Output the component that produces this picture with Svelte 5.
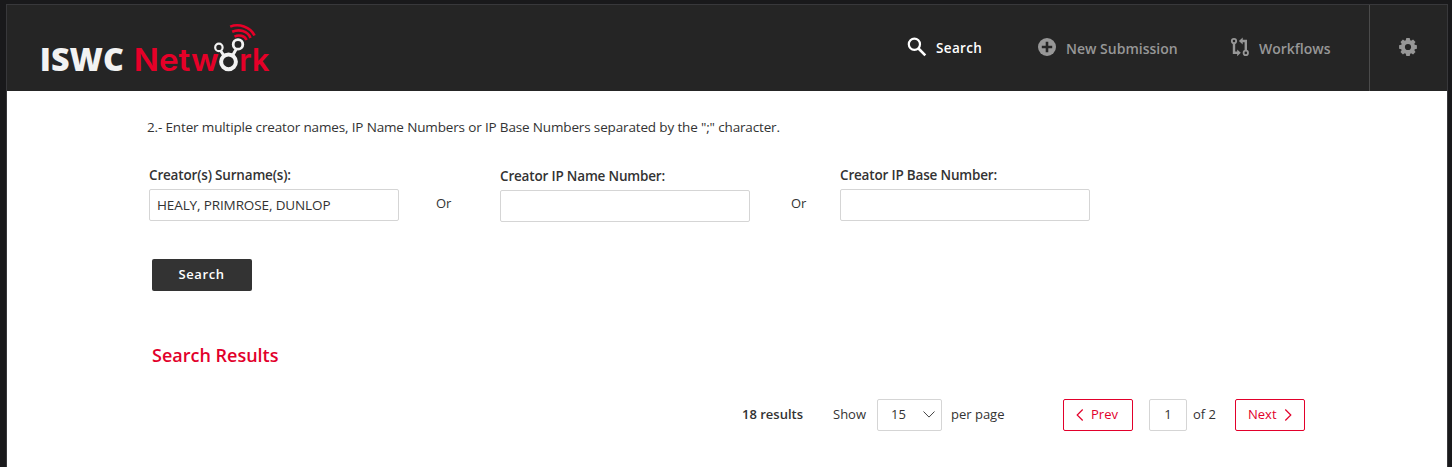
<script>
  let surnames = $state('HEALY, PRIMROSE, DUNLOP');
  let nameNumber = $state('');
  let baseNumber = $state('');
  let page = $state('1');
</script>

<div class="window">
  <header>
    <svg class="logo" width="240" height="60" viewBox="36 20 240 60" role="img" aria-label="ISWC Network">
      <text class="iswc" x="39.8" y="70.5" textLength="84" lengthAdjust="spacingAndGlyphs">ISWC</text>
      <text class="net" x="133.8" y="70.8" textLength="85" lengthAdjust="spacingAndGlyphs">Netw</text>
      <text class="net" x="239.3" y="70.8" textLength="30" lengthAdjust="spacingAndGlyphs">rk</text>
      <g fill="none" stroke="#f2f2f2">
        <path d="M220.5 50.5l4 6M236 49.5l-4 7" stroke-width="3" />
        <circle cx="228.5" cy="61.8" r="7.4" stroke-width="4" />
        <circle cx="218.9" cy="47.4" r="3.7" stroke-width="2.2" />
        <circle cx="238" cy="44.4" r="4.8" stroke-width="2.8" />
      </g>
      <g fill="none" stroke="#e60028" stroke-width="2.6">
        <path d="M230.2 26.6C238.5 23.2 250.5 26.5 254.5 35.6" />
        <path d="M232.2 31.8C239 28.6 247.8 31 250.5 38" />
        <path d="M234.5 36.6C239 34.2 244.8 35.8 246.6 40" />
      </g>
    </svg>

    <nav>
      <a class="item active" href="#search">
        <svg width="20" height="20" viewBox="0 0 20 20" fill="none" stroke="currentColor">
          <circle cx="7.4" cy="7.3" r="5.6" stroke-width="2.2" />
          <path d="M11.5 11.5L18.3 18.3" stroke-width="2.6" />
        </svg>
        <span>Search</span>
      </a>
      <a class="item submission" href="#new">
        <svg width="20" height="20" viewBox="0 0 20 20">
          <circle cx="10" cy="10" r="9" fill="currentColor" />
          <path d="M10 4.8v10.4M4.8 10h10.4" stroke="#252525" stroke-width="2.6" />
        </svg>
        <span>New Submission</span>
      </a>
      <a class="item workflows" href="#workflows">
        <svg width="20" height="20" viewBox="0 0 20 20" fill="none" stroke="currentColor" stroke-width="1.8">
          <circle cx="4" cy="4" r="2.2" />
          <circle cx="15.8" cy="15.9" r="2.2" />
          <path d="M4 6.2V15.8H8.5M15.8 13.7V4H11.5" stroke-width="2.4" />
          <path d="M7.2 12.4v6.8l3.6-3.4zM12.7 .6v6.8L8.9 4z" fill="currentColor" stroke="none" />
        </svg>
        <span>Workflows</span>
      </a>
    </nav>
    <a class="settings" href="#settings" aria-label="Settings">
      <svg width="20" height="20" viewBox="0 0 20 20">
        <g fill="currentColor">
          {#each [0, 45, 90, 135] as angle}
            <path d="M8.3 1.1h3.4l.7 3v11.8l-.7 3H8.3l-.7-3V4.1z" transform="rotate({angle} 10 10)" />
          {/each}
          <circle cx="10" cy="10" r="7" />
        </g>
        <circle cx="10" cy="10" r="3.1" fill="#252525" />
      </svg>
    </a>
  </header>

  <main>
    <p class="intro">2.- Enter multiple creator names, IP Name Numbers or IP Base Numbers separated by the ";" character.</p>
    <form>
      <label class="f1"><span>Creator(s) Surname(s):</span><input bind:value={surnames} /></label>
      <span class="or or1">Or</span>
      <label class="f2"><span>Creator IP Name Number:</span><input bind:value={nameNumber} /></label>
      <span class="or or2">Or</span>
      <label class="f3"><span>Creator IP Base Number:</span><input bind:value={baseNumber} /></label>
    </form>
    <button class="submit">Search</button>
    <h2><span>Search Results</span></h2>
    <div class="pager">
      <b>18 results</b>
      <span class="show">Show</span>
      <button class="select">15
        <svg width="12" height="8" viewBox="0 0 12 8" fill="none" stroke="#444"><path d="M.5 1.5L6 7.1 11.5 1.5" /></svg>
      </button>
      <span class="per">per page</span>
      <button class="step prev">
        <svg width="8" height="12" viewBox="0 0 8 12" fill="none" stroke="currentColor" stroke-width="1.2"><path d="M6.7.5L1.2 6l5.5 5.5" /></svg>
        <span>Prev</span>
      </button>
      <input class="page" bind:value={page} aria-label="Page" />
      <span class="of">of 2</span>
      <button class="step next">
        <span>Next</span>
        <svg width="8" height="12" viewBox="0 0 8 12" fill="none" stroke="currentColor" stroke-width="1.2"><path d="M1.3.5L6.8 6l-5.5 5.5" /></svg>
      </button>
    </div>
  </main>
</div>

<style>
  :global(body) { background: #19191b; overflow: hidden; }
  * { box-sizing: border-box; }
  .window {
    width: 1442px;
    height: 463px;
    margin: 4px 0 0 6px;
    border: 1px solid #38383b;
    border-bottom: 0;
    background: #fff;
    color: #333;
    font: 13px/18px "Open Sans", sans-serif;
    white-space: nowrap;
    overflow: hidden;
  }
  header { display: flex; height: 86px; background: #252525; }
  .logo { flex: none; margin: 15px 0 0 29px; }
  .iswc { font: 800 31.5px "Open Sans", sans-serif; fill: #f2f2f2; }
  .net { font: 600 31px Inter, sans-serif; fill: #e60028; }
  nav { display: flex; align-items: flex-start; margin-left: 631px; padding-top: 32px; width: 462px; flex: none; }
  a { text-decoration: none; color: #979797; }
  .item { display: flex; gap: 9px; font-weight: 600; font-size: 14px; line-height: 20px; }
  .item svg { flex: none; }
  .item span { margin-top: 2px; }
  .item.active { width: 130px; color: #fff; }
  .item.active span { margin-top: 1px; font-size: 13.5px; letter-spacing: .35px; }
  .submission { width: 193px; }
  .settings { width: 78px; border-left: 1px solid #4b4b4b; padding: 32px 0 0 28px; }
  main { padding-left: 140px; }
  .intro { margin: 27px 0 0; line-height: 18px; font-size: 13.5px; letter-spacing: -.15px; }
  form { display: flex; align-items: flex-start; margin-top: 31px; height: 57px; }
  label { display: block; width: 250px; }
  label span { display: block; height: 18px; font-weight: 600; font-size: 13.5px; letter-spacing: -.18px; }
  label input { display: block; margin-top: 5px; width: 250px; height: 32px; }
  input {
    border: 1px solid #d5d5d5;
    border-radius: 2px;
    padding: 0 7px;
    color: #333;
    background: #fff;
    font: 13.5px "Open Sans", sans-serif;
    letter-spacing: -.12px;
    outline: 0;
  }
  .f1, .f3 { margin-top: -1px; }
  .f1 { margin-left: 2px; }
  .or { margin-top: 27px; }
  .or1 { width: 101px; padding-left: 37px; }
  .or2 { width: 90px; padding-left: 41px; }
  button { font: 13px/18px "Open Sans", sans-serif; border-radius: 2px; padding: 0; }
  .submit {
    display: block;
    width: 100px;
    height: 32px;
    margin: 35px 0 0 5px;
    border: 0;
    background: #333;
    color: #fff;
    font-weight: 600;
    letter-spacing: .6px;
    padding: 0 1px 2px 0;
  }
  h2 { margin: 51px 0 0 5px; color: #e2002b; font-size: 18px; line-height: 26px; font-weight: 600; }
  .pager { display: flex; align-items: center; height: 32px; margin: 31px 0 0 595px; }
  .pager b, .pager span { padding-bottom: 2px; }
  .pager b { width: 91px; font-weight: 600; }
  .show { width: 44px; }
  .select { display: flex; align-items: center; width: 65px; height: 32px; padding: 0 6px 2px 13px; justify-content: space-between; border: 1px solid #d5d5d5; background: #fff; color: #333; }
  .per { width: 121px; padding-left: 9px; }
  .step { display: flex; align-items: center; width: 70px; height: 32px; border: 1px solid #e2002b; background: #fff; color: #e2002b; }
  .prev { padding-left: 12px; gap: 7px; }
  .page { width: 38px; height: 32px; margin-left: 16px; padding: 0 0 2px; text-align: center; font-size: 13px; }
  .of { width: 48px; padding-left: 6px; }
  .next { padding-left: 12px; gap: 7px; }
</style>
